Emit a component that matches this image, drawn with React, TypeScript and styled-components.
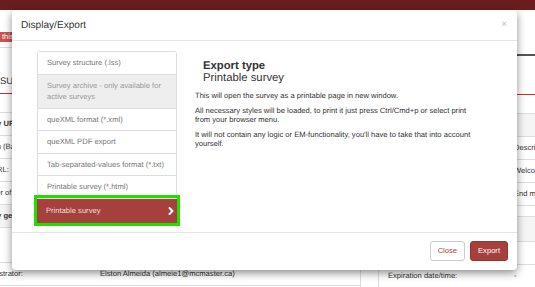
import React from "react";
import styled, { createGlobalStyle } from "styled-components";
import { ChevronRight } from "lucide-react";

const GlobalStyle = createGlobalStyle`
  html, body {
    margin: 0;
    padding: 0;
  }
  body {
    background: #fff;
    font-family: "Liberation Sans", Arial, sans-serif;
    color: #333;
    text-rendering: geometricPrecision;
  }
`;

const Page = styled.div`
  position: relative;
  width: 535px;
  height: 287px;
  overflow: hidden;
`;

const Navbar = styled.div`
  height: 10px;
  background: #6b1c1c;
`;

const Alert = styled.div`
  margin-top: 22px;
  width: 300px;
  height: 10px;
  padding-left: 2px;
  background: #c9534f;
  color: #fff;
  font-size: 7.6px;
  line-height: 10px;
`;

const Summary = styled.div`
  display: grid;
  grid-template-columns: 385px 200px;
  column-gap: 17px;
  margin: 5px 0 0 -24px;
`;

const LeftPanel = styled.div`
  border-top: 1px solid #ddd;
  border-right: 1px solid #ddd;
`;

const PanelTitle = styled.div`
  height: 46px;
  padding: 28px 0 0 24px;
  box-sizing: border-box;
  border-bottom: 1px solid #c9302c;
  font-size: 9.5px;
  line-height: 12px;
  text-transform: uppercase;
  color: #333;
`;

const Table = styled.div<{ $offset: number }>`
  margin-top: ${(p) => p.$offset}px;
  border-top: 1px solid #ddd;
`;

const Row = styled.div<{ $height?: number; $band?: boolean; $bold?: boolean; $labelWidth: number }>`
  display: grid;
  grid-template-columns: ${(p) => p.$labelWidth}px 1fr;
  height: ${(p) => p.$height ?? 22}px;
  border-bottom: 1px solid #ddd;
  background: ${(p) => (p.$band ? "#f5f5f5" : "#fff")};
  font-size: 7.6px;
  line-height: 22px;
  font-weight: ${(p) => (p.$bold ? 700 : 400)};
  color: #333;
  white-space: nowrap;
  overflow: hidden;
`;

const Label = styled.span<{ $indent?: number }>`
  padding-left: ${(p) => p.$indent ?? 0}px;
`;

const RightPanel = styled.div`
  border-left: 1px solid #ddd;
`;

const RightHead = styled.div`
  height: 38px;
  margin-top: 7px;
  border-top: 2px solid #555;
  border-bottom: 1px solid #c9302c;
`;

const Modal = styled.div`
  position: absolute;
  left: 12px;
  top: 10px;
  width: 505px;
  height: 260px;
  display: flex;
  flex-direction: column;
  background: #fff;
  border-radius: 4px;
  box-shadow: 0 3px 9px rgba(0, 0, 0, 0.45);
`;

const ModalHeader = styled.div`
  height: 31px;
  box-sizing: border-box;
  padding: 0 10px 0 9px;
  display: flex;
  align-items: center;
  justify-content: space-between;
  border-bottom: 1px solid #e5e5e5;
`;

const ModalTitle = styled.h4`
  margin: 0;
  font-size: 10.1px;
  font-weight: 400;
  color: #333;
`;

const CloseX = styled.span`
  font-size: 10px;
  line-height: 10px;
  color: #c4c4c4;
`;

const ModalBody = styled.div`
  flex: 1;
  display: flex;
  gap: 18px;
  padding: 10px 0 0 25px;
`;

const ExportList = styled.div`
  width: 140px;
  align-self: flex-start;
  border: 1px solid #ddd;
  border-radius: 3px;
  box-sizing: border-box;
`;

const ListItem = styled.div<{ $disabled?: boolean; $active?: boolean }>`
  display: flex;
  align-items: center;
  justify-content: space-between;
  padding: ${(p) => (p.$active ? "6px 0 6px 9px" : "5px 6px 5px 9px")};
  border-top: 1px solid #ddd;
  font-size: 7.6px;
  line-height: 11.5px;
  background: ${(p) => (p.$active ? "#a6403d" : p.$disabled ? "#eee" : "#fff")};
  color: ${(p) => (p.$active ? "#f3dede" : p.$disabled ? "#999" : "#777")};
  outline: ${(p) => (p.$active ? "3px solid #22dd00" : "none")};
  margin: ${(p) => (p.$active ? "0 -1px -1px" : "0")};
  &:first-child {
    border-top: none;
  }
`;

const Info = styled.div`
  width: 280px;
  padding-top: 9px;
`;

const Heading = styled.h3`
  margin: 0 0 7px;
  padding-left: 8px;
  font-size: 11.3px;
  line-height: 12px;
  font-weight: 400;
  color: #333;
  b {
    font-weight: 700;
  }
`;

const Para = styled.p`
  margin: 0 0 5px;
  font-size: 7.6px;
  line-height: 9.5px;
  color: #333;
`;

const ModalFooter = styled.div`
  height: 38px;
  box-sizing: border-box;
  display: flex;
  justify-content: flex-end;
  align-items: flex-start;
  gap: 5px;
  padding: 8px 9px 0;
  border-top: 1px solid #e5e5e5;
`;

const Button = styled.button<{ $primary?: boolean }>`
  height: 20px;
  padding: 0 7px;
  border-radius: 3px;
  border: 1px solid ${(p) => (p.$primary ? "#8f3633" : "#ccc")};
  background: ${(p) => (p.$primary ? "#a6403d" : "#fff")};
  color: ${(p) => (p.$primary ? "#fff" : "#a94442")};
  font-family: "Liberation Sans", Arial, sans-serif;
  font-size: 7.6px;
  line-height: 18px;
`;

const exportTypes = [
  { label: "Survey structure (.lss)" },
  { label: "Survey archive - only available for active surveys", disabled: true },
  { label: "queXML format (*.xml)" },
  { label: "queXML PDF export" },
  { label: "Tab-separated-values format (*.txt)" },
  { label: "Printable survey (*.html)" },
];

const App = () => {
  return (
    <>
      <GlobalStyle />
      <Page>
        <Navbar />
        <Alert>this</Alert>
        <Summary>
          <LeftPanel>
            <PanelTitle>Survey summary</PanelTitle>
            <Table $offset={18}>
              <Row $bold $labelWidth={124}>
                <Label>Survey URLs:</Label>
              </Row>
              <Row $labelWidth={124}>
                <Label>English (Base language):</Label>
              </Row>
              <Row $labelWidth={124}>
                <Label>End URL:</Label>
              </Row>
              <Row $labelWidth={124}>
                <Label>Number of questions/groups:</Label>
              </Row>
              <Row $band $bold $labelWidth={124}>
                <Label>Survey general settings</Label>
              </Row>
              <Row $height={34} $labelWidth={124} />
              <Row $labelWidth={124}>
                <Label>Administrator:</Label>
                <span>Elston Almeida (almeie1@mcmaster.ca)</span>
              </Row>
            </Table>
          </LeftPanel>
          <RightPanel>
            <RightHead />
            <Table $offset={18}>
              <Row $band $labelWidth={135} />
              <Row $labelWidth={135}>
                <span />
                <span>Description:</span>
              </Row>
              <Row $labelWidth={135}>
                <span />
                <span>Welcome:</span>
              </Row>
              <Row $labelWidth={135}>
                <span />
                <span>End message:</span>
              </Row>
              <Row $height={10} $labelWidth={135} />
              <Row $band $height={24} $labelWidth={135} />
              <Row $height={22} $labelWidth={135} />
              <Row $labelWidth={135}>
                <Label $indent={9}>Expiration date/time:</Label>
                <span>-</span>
              </Row>
            </Table>
          </RightPanel>
        </Summary>

        <Modal>
          <ModalHeader>
            <ModalTitle>Display/Export</ModalTitle>
            <CloseX>×</CloseX>
          </ModalHeader>
          <ModalBody>
            <ExportList>
              {exportTypes.map((t) => (
                <ListItem key={t.label} $disabled={t.disabled}>
                  {t.label}
                </ListItem>
              ))}
              <ListItem $active>
                Printable survey
                <ChevronRight size={12} strokeWidth={4} color="#fff" />
              </ListItem>
            </ExportList>
            <Info>
              <Heading>
                <b>Export type</b>
                <br />
                Printable survey
              </Heading>
              <Para>This will open the survey as a printable page in new window.</Para>
              <Para>
                All necessary styles will be loaded, to print it just press Ctrl/Cmd+p or select print
                from your browser menu.
              </Para>
              <Para>
                It will not contain any logic or EM-functionality, you'll have to take that into account
                yourself.
              </Para>
            </Info>
          </ModalBody>
          <ModalFooter>
            <Button>Close</Button>
            <Button $primary>Export</Button>
          </ModalFooter>
        </Modal>
      </Page>
    </>
  );
};

export default App;
